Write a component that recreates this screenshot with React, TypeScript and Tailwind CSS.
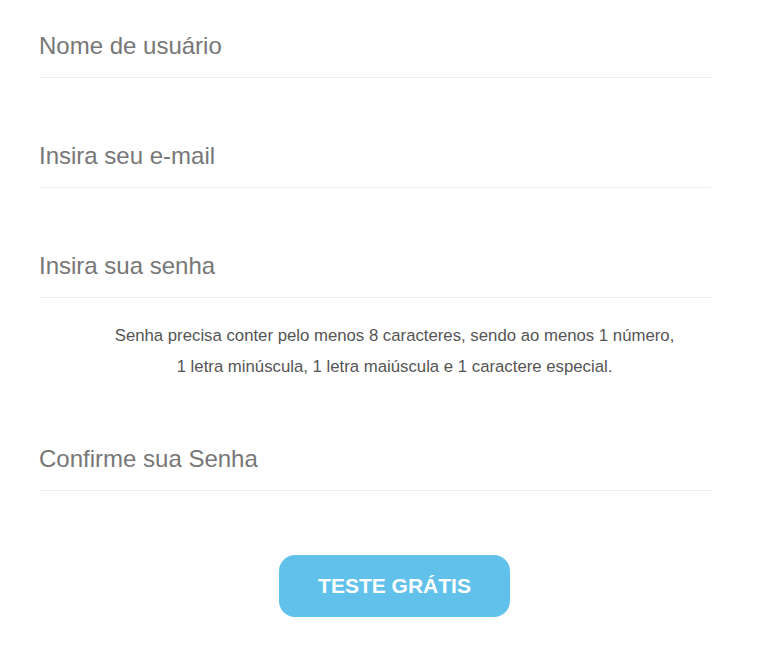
export default function App() {
  const fields = ['Nome de usuário', 'Insira seu e-mail', 'Insira sua senha'];

  return (
    <div className="min-h-screen bg-white font-['Liberation_Sans',Arial,sans-serif]">
      <form className="w-[750px] pl-[39px] pt-[28px] pb-[47px] flex flex-col">
        {fields.map((label, i) => (
          <input
            key={label}
            type={i === 2 ? 'password' : 'text'}
            placeholder={label}
            className={`w-[672px] h-[50px] pb-[14px] border-b border-[#ececec] text-[24px] text-[#555] placeholder:text-[#777] outline-none bg-transparent ${i > 0 ? 'mt-[60px]' : ''}`}
          />
        ))}

        <p className="mt-[22px] text-center text-[16.75px] leading-[31px] text-[#555]">
          Senha precisa conter pelo menos 8 caracteres, sendo ao menos 1 número,
          <br />
          1 letra minúscula, 1 letra maiúscula e 1 caractere especial.
        </p>

        <input
          type="password"
          placeholder="Confirme sua Senha"
          className="mt-[59px] w-[672px] h-[50px] pb-[14px] border-b border-[#ececec] text-[24px] text-[#555] placeholder:text-[#777] outline-none bg-transparent"
        />

        <div className="mt-[64px] flex justify-center">
          <button
            type="button"
            className="w-[231px] h-[62px] rounded-[16px] bg-[#61c1eb] text-white text-[21px] font-bold"
          >
            TESTE GRÁTIS
          </button>
        </div>
      </form>
    </div>
  );
}
